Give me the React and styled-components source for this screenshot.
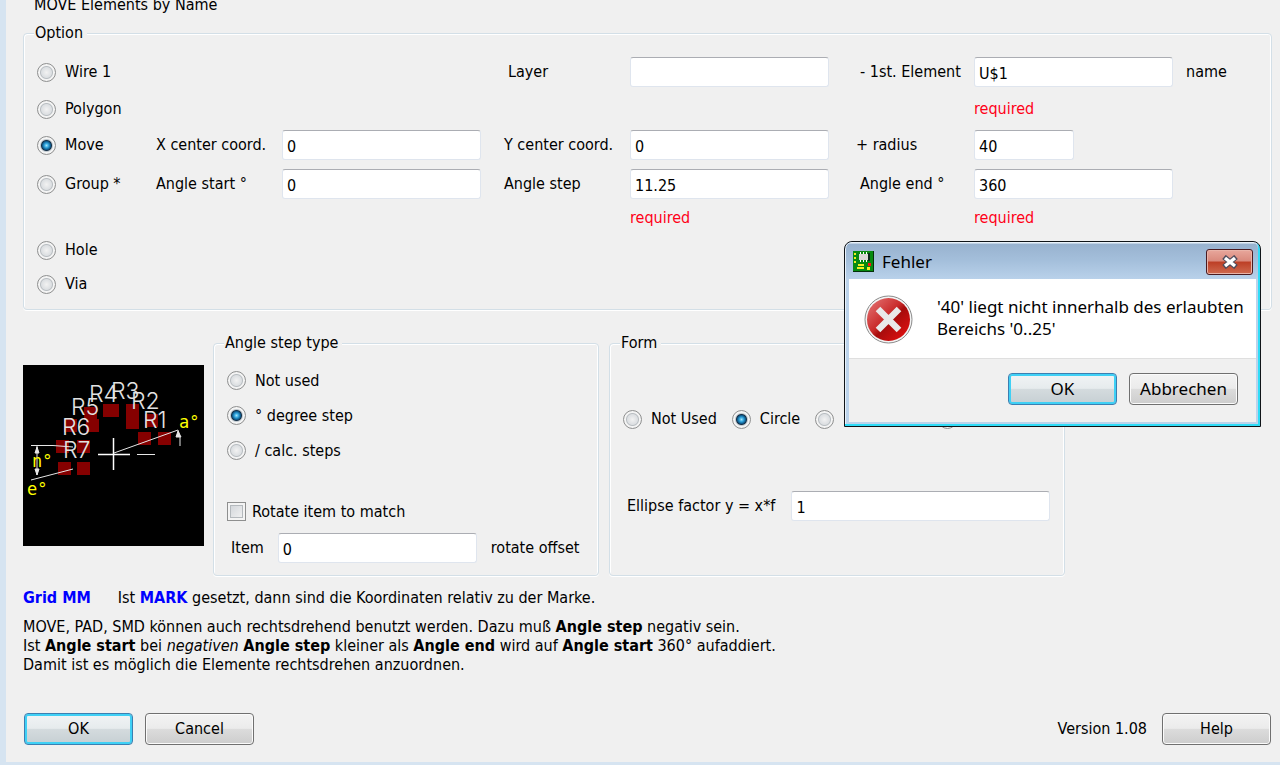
import React from 'react';
import styled, { createGlobalStyle, css } from 'styled-components';

const GlobalStyle = createGlobalStyle`
  * {
    box-sizing: border-box;
  }
  body {
    margin: 0;
    background: #d6e4f1;
    color: #000;
    font: 16px/20px 'DejaVu Sans Condensed', 'Noto Sans', sans-serif;
  }
`;

const Window = styled.main`
  position: relative;
  min-height: calc(100vh - 3px);
  margin: 0 0 3px 6px;
  padding: 0 8px 17px 17px;
  background: #f0f0f0;
`;

const Title = styled.h1`
  margin: 0 0 13px 11px;
  font-size: 16px;
  line-height: 10px;
  font-weight: normal;
`;

const Group = styled.fieldset`
  width: ${({ $width }) => ($width ? `${$width}px` : 'auto')};
  min-width: 0;
  margin: 0;
  padding: 10px 13px;
  border: 1px solid #d3dfe7;
  border-radius: 4px;
  box-shadow: inset 1px 1px 0 #fff, inset -1px 0 0 #fff, 0 1px 0 #fff;
`;

const Legend = styled.legend`
  margin-left: -3px;
  padding: 0 4px 0 1px;
  background: #f0f0f0;
`;

const OptionGrid = styled.div`
  display: grid;
  grid-template-columns: 119px 126px 222px 126px 226px 118px 212px 1fr;
  grid-template-rows: 38px 36px 36px 42px 26px 38px 30px;
  align-items: center;
`;

const Cell = styled.div`
  grid-column: ${({ $col }) => $col};
  grid-row: ${({ $row }) => $row};
  padding-left: ${({ $indent }) => ($indent ? '4px' : 0)};
  white-space: nowrap;
`;

const FieldLabel = styled.label`
  white-space: nowrap;
`;

const Required = styled.span`
  color: #ff0018;
`;

const TextInput = styled.input`
  display: block;
  width: ${({ $width }) => $width || 199}px;
  height: 30px;
  padding: 2px 4px 0;
  border: 1px solid #dfe5ee;
  border-top-color: #abadb3;
  border-radius: 3px;
  background: #fff;
  color: #000;
  font: inherit;
  outline: none;
`;

const Choice = styled.label`
  display: flex;
  align-items: center;
  gap: ${({ $gap }) => $gap || 9}px;
  white-space: nowrap;
`;

const RadioInput = styled.input`
  appearance: none;
  flex: none;
  width: 19px;
  height: 19px;
  margin: 0;
  border: 1px solid #8e8f8f;
  border-radius: 50%;
  background: radial-gradient(circle at 50% 50%, #f2f2f2 0, #dcdfe2 5px, #b9bec2 6px, #f4f4f4 7px);

  &:checked {
    background: radial-gradient(circle at 50% 50%, #a5e4fb 0, #35a9e0 2px, #0f5f92 4px, #17324a 5px, #c3cbd0 6px, #f4f4f4 7px);
  }
`;

const CheckInput = styled.input`
  appearance: none;
  flex: none;
  width: 19px;
  height: 19px;
  margin: 0;
  border: 1px solid #8e8f8f;
  background: linear-gradient(135deg, #cdd1d6, #f6f6f6);
  box-shadow: inset 0 0 0 2px #f4f4f4, inset 0 0 0 3px #b4b9bd;
`;

const Panels = styled.div`
  display: flex;
  align-items: stretch;
  margin: 23px 0 12px;
`;

const Preview = styled.svg`
  flex: none;
  width: 181px;
  height: 181px;
  margin: 32px 9px 0 0;
  background: #000;
`;

const StepGroup = styled(Group)`
  margin-right: 10px;
`;

const ChoiceList = styled.div`
  display: grid;
  grid-auto-rows: 35px;
  margin-bottom: 26px;
`;

const CheckRow = styled.div`
  display: flex;
  height: 35px;
`;

const OffsetRow = styled.div`
  display: flex;
  align-items: center;
  gap: 14px;
  margin: 4px 0 2px;
  padding-left: 4px;
`;

const FormChoices = styled.div`
  display: flex;
  gap: 15px;
  margin: 46px 0 62px;
  padding-left: 10px;
  padding-left: 0;
`;

const EllipseRow = styled.div`
  display: flex;
  align-items: center;
  gap: 16px;
  padding-left: 4px;
`;

const Blue = styled.b`
  color: #0000ff;
`;

const MarkHint = styled.p`
  display: flex;
  gap: 27px;
  margin: 0 0 9px;
`;

const Notes = styled.p`
  margin: 0;
  line-height: 19px;
`;

const Footer = styled.footer`
  display: flex;
  align-items: center;
  gap: 12px;
  margin-top: 39px;
  padding: 0 1px;
`;

const Version = styled.span`
  margin: 0 3px 0 auto;
`;

const Button = styled.button`
  width: 109px;
  height: 32px;
  padding: 0;
  border: 1px solid #707070;
  border-radius: 4px;
  background: linear-gradient(#f3f3f3, #ebebeb 48%, #dcdcdc 50%, #cdcdcd);
  box-shadow: inset 0 0 0 1px #fbfbfb;
  color: #000;
  font: inherit;

  ${({ $primary }) =>
    $primary &&
    css`
      border-color: #3c7fb1;
      background: linear-gradient(#f1f4f5, #e6ebed 48%, #d4dbde 50%, #c6cfd3);
      box-shadow: inset 0 0 0 2px #3fd0f5;
    `}
`;

const Dialog = styled.section`
  position: absolute;
  top: 241px;
  left: 838px;
  width: 417px;
  padding: 0 4px 4px;
  border: 1px solid #101418;
  border-radius: 8px 8px 0 0;
  background: #bcd3eb;
  box-shadow: inset -2px -2px 0 #2fdcf7, inset 1px 1px 0 #e9f2fa;
  font: 17px/22px 'Noto Sans', sans-serif;
`;

const TitleBar = styled.header`
  display: flex;
  align-items: center;
  height: 37px;
  margin: 0 -2px 0 -3px;
  padding: 2px 5px 0 7px;
  background: linear-gradient(#e9f2fa 1px, #98b2cf 2px, #a4bfdb 50%, #b9d1ea);
  border-radius: 7px 7px 0 0;
`;

const DialogTitle = styled.h2`
  margin: 0 auto 0 8px;
  font-size: 17px;
  font-weight: normal;
`;

const CloseButton = styled.button`
  display: flex;
  align-items: center;
  justify-content: center;
  width: 47px;
  height: 26px;
  padding: 0;
  border: 1px solid #4a1a20;
  border-radius: 3px;
  background: linear-gradient(#e8a79c, #d9897c 46%, #bd3f26 50%, #cf6a50);
  box-shadow: inset 0 0 0 1px #e9b3a8;
`;

const Message = styled.div`
  display: flex;
  align-items: flex-start;
  gap: 24px;
  height: 80px;
  padding: 16px 0 0 15px;
  border-bottom: 1px solid #dfdfdf;
  background: #fff;

  svg {
    flex: none;
  }

  p {
    margin: 1px 0 0;
    white-space: nowrap;
  }
`;

const DialogButtons = styled.div`
  display: flex;
  justify-content: flex-end;
  gap: 12px;
  padding: 14px 18px 17px;
  background: #f0f0f0;
`;

const pads = [
  [115, 67], [135, 67], [122, 49], [103, 39], [103, 51], [80, 39], [83, 39],
  [61, 42], [63, 54], [41, 54], [33, 75], [54, 75], [35, 97], [54, 97]
];

const refs = [
  ['R1', 120, 63], ['R2', 108, 44], ['R3', 88, 34], ['R4', 66, 37],
  ['R5', 48, 50], ['R6', 39, 70], ['R7', 40, 93]
];

const BoardPreview = () => (
  <Preview viewBox="0 0 181 181" role="img" aria-label="Angle preview">
    <g fill="#850000">
      {pads.map(([x, y], i) => (
        <rect key={i} x={x} y={y} width="13" height="13" />
      ))}
    </g>
    <g fill="#e2e2e2" fontFamily="Inter, sans-serif" fontSize="23" fontWeight="300">
      {refs.map(([name, x, y]) => (
        <text key={name} x={x} y={y}>{name}</text>
      ))}
    </g>
    <g stroke="#e6e6e6" fill="none">
      <path d="M90.500 73V105M75 89.500H107" stroke="#fff" strokeWidth="1.500" />
      <path d="M114 89.500H132" />
      <path d="M91 88L155 65M8 80.500H30L50 82M8 115L50 104" />
      <path d="M14 81V110M155 65Q158 72 157 81" />
      <path d="M14 82l-2 6h4zM14 110l-2 -6h4zM155 66l-2 6h5z" fill="#e6e6e6" />
    </g>
    <g fill="#ffff00" fontFamily="'DejaVu Sans Mono', monospace" fontSize="17">
      <text x="156" y="63">a°</text>
      <text x="9" y="102">n°</text>
      <text x="4" y="130">e°</text>
    </g>
  </Preview>
);

const BoardIcon = () => (
  <svg width="21" height="21" viewBox="0 0 21 21" aria-hidden="true">
    <path d="M0 0H21V21H0z" fill="#04300a" />
    <path d="M0 0H20V20H0z" fill="#078a10" />
    <path d="M6 3h9v6H6z" fill="#d8d8d8" />
    <path d="M7 1h1v2H7zM10 1h1v2h-1zM13 1h1v2h-1zM7 9h1v2H7zM10 9h1v2h-1zM13 9h1v2h-1z" fill="#fff" />
    <path d="M15 2h2v8h-2z" fill="#0b2a1c" />
    <path d="M1 2h2v2H1zM1 6h2v2H1zM1 10h2v2H1zM5 13h6v2H5zM4 16h7v2H4zM14 16h3v3h-3z" fill="#f3ef22" />
    <path d="M15 12h3v3h-3z" fill="#f11" />
  </svg>
);

const ErrorIcon = () => (
  <svg width="49" height="49" viewBox="0 0 49 49" aria-hidden="true">
    <defs>
      <linearGradient id="errorFill" x1="0" y1="0" x2="1" y2="1">
        <stop offset="0" stopColor="#e77a7a" />
        <stop offset="0.450" stopColor="#c92a2a" />
        <stop offset="0.550" stopColor="#a60c0c" />
        <stop offset="1" stopColor="#ee1111" />
      </linearGradient>
    </defs>
    <circle cx="24.500" cy="24.500" r="23.500" fill="#f3f3f3" stroke="#8b8b8b" />
    <circle cx="24.500" cy="24.500" r="21.500" fill="url(#errorFill)" />
    <path d="M14 14L35 35M35 14L14 35" stroke="#e9e9e9" strokeWidth="6.500" />
  </svg>
);

const CloseIcon = () => (
  <svg width="18" height="14" viewBox="0 0 18 14" aria-hidden="true">
    <path d="M3 2L15 12M15 2L3 12" stroke="#4d4c5c" strokeWidth="5.500" />
    <path d="M4 3L14 11M14 3L4 11" stroke="#fff" strokeWidth="3.500" />
  </svg>
);

const Radio = ({ name, children, checked }) => (
  <Choice>
    <RadioInput type="radio" name={name} defaultChecked={checked} />
    {children}
  </Choice>
);

const modes = [
  ['Wire 1', 1], ['Polygon', 2], ['Move', 3], ['Group *', 4], ['Hole', 6], ['Via', 7]
];

const fields = [
  { id: 'layer', label: 'Layer', row: 1, col: 4, value: '', indent: true },
  { id: 'element', label: '- 1st. Element', row: 1, col: 6, value: 'U$1', indent: true },
  { id: 'x-center', label: 'X center coord.', row: 3, col: 2, value: '0' },
  { id: 'y-center', label: 'Y center coord.', row: 3, col: 4, value: '0' },
  { id: 'radius', label: '+ radius', row: 3, col: 6, value: '40', width: 100 },
  { id: 'angle-start', label: 'Angle start °', row: 4, col: 2, value: '0' },
  { id: 'angle-step', label: 'Angle step', row: 4, col: 4, value: '11.25' },
  { id: 'angle-end', label: 'Angle end °', row: 4, col: 6, value: '360', indent: true }
];

const Options = () => (
  <Group>
    <Legend>Option</Legend>
    <OptionGrid>
      {modes.map(([label, row]) => (
        <Cell key={label} $col={1} $row={row}>
          <Radio name="mode" checked={label === 'Move'}>{label}</Radio>
        </Cell>
      ))}
      {fields.map(({ id, label, row, col, value, width, indent }) => (
        <React.Fragment key={id}>
          <Cell $col={col} $row={row} $indent={indent}>
            <FieldLabel htmlFor={id}>{label}</FieldLabel>
          </Cell>
          <Cell $col={col + 1} $row={row}>
            <TextInput id={id} defaultValue={value} $width={width} />
          </Cell>
        </React.Fragment>
      ))}
      <Cell $col={8} $row={1}>name</Cell>
      <Cell $col={7} $row={2}><Required>required</Required></Cell>
      <Cell $col={5} $row={5}><Required>required</Required></Cell>
      <Cell $col={7} $row={5}><Required>required</Required></Cell>
    </OptionGrid>
  </Group>
);

const ErrorDialog = () => (
  <Dialog role="alertdialog" aria-labelledby="error-title">
    <TitleBar>
      <BoardIcon />
      <DialogTitle id="error-title">Fehler</DialogTitle>
      <CloseButton type="button" aria-label="Close"><CloseIcon /></CloseButton>
    </TitleBar>
    <Message>
      <ErrorIcon />
      <p>&apos;40&apos; liegt nicht innerhalb des erlaubten<br />Bereichs &apos;0..25&apos;</p>
    </Message>
    <DialogButtons>
      <Button type="button" $primary>OK</Button>
      <Button type="button">Abbrechen</Button>
    </DialogButtons>
  </Dialog>
);

const App = () => (
  <>
    <GlobalStyle />
    <Window>
      <Title>MOVE Elements by Name</Title>
      <Options />
      <Panels>
        <BoardPreview />
        <StepGroup $width={386}>
          <Legend>Angle step type</Legend>
          <ChoiceList>
            <Radio name="step">Not used</Radio>
            <Radio name="step" checked>° degree step</Radio>
            <Radio name="step">/ calc. steps</Radio>
          </ChoiceList>
          <CheckRow>
            <Choice $gap={6}>
              <CheckInput type="checkbox" />
              Rotate item to match
            </Choice>
          </CheckRow>
          <OffsetRow>
            <FieldLabel htmlFor="offset">Item</FieldLabel>
            <TextInput id="offset" defaultValue="0" />
            <span>rotate offset</span>
          </OffsetRow>
        </StepGroup>
        <Group $width={456}>
          <Legend>Form</Legend>
          <FormChoices>
            <Radio name="form">Not Used</Radio>
            <Radio name="form" checked>Circle</Radio>
            <Radio name="form">Half ellipse</Radio>
            <Radio name="form">Sp. ellipse</Radio>
          </FormChoices>
          <EllipseRow>
            <FieldLabel htmlFor="factor">Ellipse factor y = x*f</FieldLabel>
            <TextInput id="factor" defaultValue="1" $width={259} />
          </EllipseRow>
        </Group>
      </Panels>
      <MarkHint>
        <Blue>Grid MM</Blue>
        <span>Ist <Blue>MARK</Blue> gesetzt, dann sind die Koordinaten relativ zu der Marke.</span>
      </MarkHint>
      <Notes>
        MOVE, PAD, SMD können auch rechtsdrehend benutzt werden. Dazu muß <b>Angle step</b> negativ sein.<br />
        Ist <b>Angle start</b> bei <i>negativen</i> <b>Angle step</b> kleiner als <b>Angle end</b> wird auf <b>Angle start</b> 360° aufaddiert.<br />
        Damit ist es möglich die Elemente rechtsdrehen anzuordnen.
      </Notes>
      <Footer>
        <Button type="button" $primary>OK</Button>
        <Button type="button">Cancel</Button>
        <Version>Version 1.08</Version>
        <Button type="button">Help</Button>
      </Footer>
      <ErrorDialog />
    </Window>
  </>
);

export default App;
